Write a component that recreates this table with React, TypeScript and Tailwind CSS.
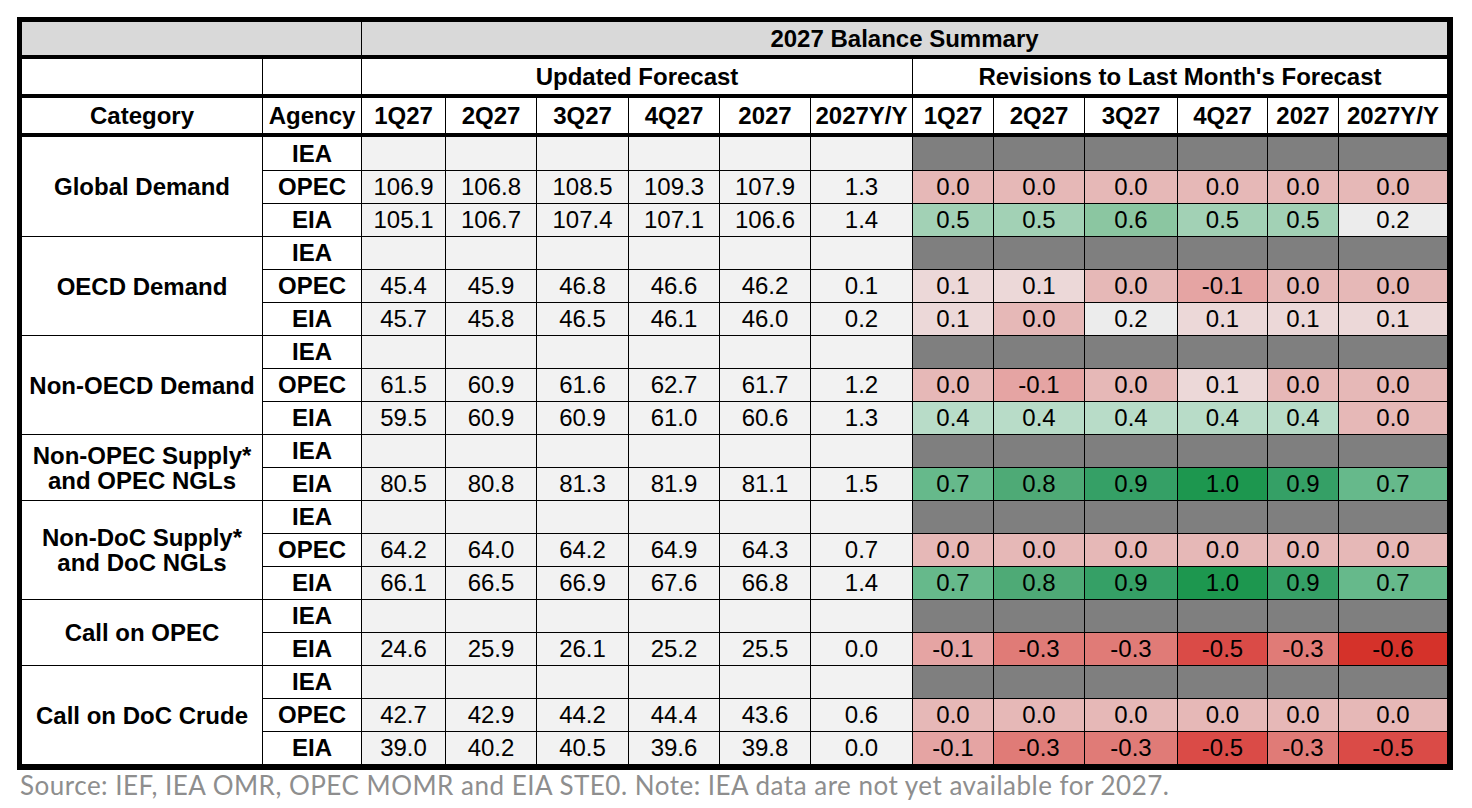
import React from "react";

type Rev = { v: string; c: string } | null;

const GRAY = "bg-[#7f7f7f]";
const PINK = "bg-[#e6b8b7]";
const P1 = "bg-[#ecd8d8]";
const M1 = "bg-[#e5a4a3]";
const M3 = "bg-[#e07b77]";
const M5 = "bg-[#da4b47]";
const M6 = "bg-[#d5322a]";
const NEU = "bg-[#ececec]";
const G4 = "bg-[#b8dcc8]";
const G5 = "bg-[#a2d1b5]";
const G6 = "bg-[#8bc6a1]";
const G7 = "bg-[#66b98b]";
const G8 = "bg-[#4eaa76]";
const G9 = "bg-[#35a066]";
const G10 = "bg-[#1d974f]";

const r = (v: string, c: string) => ({ v, c });

type Row = { agency: string; data: string[] | null; rev: Rev[] | null };
type Group = { label: React.ReactNode; rows: Row[] };

const zeros = (): Rev[] => Array.from({ length: 6 }, () => r("0.0", PINK));

const groups: Group[] = [
  {
    label: "Global Demand",
    rows: [
      { agency: "IEA", data: null, rev: null },
      { agency: "OPEC", data: ["106.9", "106.8", "108.5", "109.3", "107.9", "1.3"], rev: zeros() },
      {
        agency: "EIA",
        data: ["105.1", "106.7", "107.4", "107.1", "106.6", "1.4"],
        rev: [r("0.5", G5), r("0.5", G5), r("0.6", G6), r("0.5", G5), r("0.5", G5), r("0.2", NEU)],
      },
    ],
  },
  {
    label: "OECD Demand",
    rows: [
      { agency: "IEA", data: null, rev: null },
      {
        agency: "OPEC",
        data: ["45.4", "45.9", "46.8", "46.6", "46.2", "0.1"],
        rev: [r("0.1", P1), r("0.1", P1), r("0.0", PINK), r("-0.1", M1), r("0.0", PINK), r("0.0", PINK)],
      },
      {
        agency: "EIA",
        data: ["45.7", "45.8", "46.5", "46.1", "46.0", "0.2"],
        rev: [r("0.1", P1), r("0.0", PINK), r("0.2", NEU), r("0.1", P1), r("0.1", P1), r("0.1", P1)],
      },
    ],
  },
  {
    label: "Non-OECD Demand",
    rows: [
      { agency: "IEA", data: null, rev: null },
      {
        agency: "OPEC",
        data: ["61.5", "60.9", "61.6", "62.7", "61.7", "1.2"],
        rev: [r("0.0", PINK), r("-0.1", M1), r("0.0", PINK), r("0.1", P1), r("0.0", PINK), r("0.0", PINK)],
      },
      {
        agency: "EIA",
        data: ["59.5", "60.9", "60.9", "61.0", "60.6", "1.3"],
        rev: [r("0.4", G4), r("0.4", G4), r("0.4", G4), r("0.4", G4), r("0.4", G4), r("0.0", PINK)],
      },
    ],
  },
  {
    label: (
      <>
        Non-OPEC Supply*
        <br />
        and OPEC NGLs
      </>
    ),
    rows: [
      { agency: "IEA", data: null, rev: null },
      {
        agency: "EIA",
        data: ["80.5", "80.8", "81.3", "81.9", "81.1", "1.5"],
        rev: [r("0.7", G7), r("0.8", G8), r("0.9", G9), r("1.0", G10), r("0.9", G9), r("0.7", G7)],
      },
    ],
  },
  {
    label: (
      <>
        Non-DoC Supply*
        <br />
        and DoC NGLs
      </>
    ),
    rows: [
      { agency: "IEA", data: null, rev: null },
      { agency: "OPEC", data: ["64.2", "64.0", "64.2", "64.9", "64.3", "0.7"], rev: zeros() },
      {
        agency: "EIA",
        data: ["66.1", "66.5", "66.9", "67.6", "66.8", "1.4"],
        rev: [r("0.7", G7), r("0.8", G8), r("0.9", G9), r("1.0", G10), r("0.9", G9), r("0.7", G7)],
      },
    ],
  },
  {
    label: "Call on OPEC",
    rows: [
      { agency: "IEA", data: null, rev: null },
      {
        agency: "EIA",
        data: ["24.6", "25.9", "26.1", "25.2", "25.5", "0.0"],
        rev: [r("-0.1", M1), r("-0.3", M3), r("-0.3", M3), r("-0.5", M5), r("-0.3", M3), r("-0.6", M6)],
      },
    ],
  },
  {
    label: "Call on DoC Crude",
    rows: [
      { agency: "IEA", data: null, rev: null },
      { agency: "OPEC", data: ["42.7", "42.9", "44.2", "44.4", "43.6", "0.6"], rev: zeros() },
      {
        agency: "EIA",
        data: ["39.0", "40.2", "40.5", "39.6", "39.8", "0.0"],
        rev: [r("-0.1", M1), r("-0.3", M3), r("-0.3", M3), r("-0.5", M5), r("-0.3", M3), r("-0.5", M5)],
      },
    ],
  },
];

const DW = ["w-[84px]", "w-[91px]", "w-[92px]", "w-[91px]", "w-[91px]", "w-[102px]"];
const RW = ["w-[81px]", "w-[91px]", "w-[93px]", "w-[90px]", "w-[71px]", "w-[109px]"];
const HEADS = ["1Q27", "2Q27", "3Q27", "4Q27", "2027", "2027Y/Y"];

const cell = "flex items-center justify-center border-l border-black shrink-0";

export default function App() {
  let first = true;
  return (
    <div className="w-[1472px] h-[808px] bg-white pl-[17px] pt-[17px] text-black">
      <div
        className="w-[1436px] border-[5px] border-r-[6px] border-b-[6px] border-black text-[24px]"
        style={{ fontFamily: '"Liberation Sans", Arial, sans-serif' }}
      >
        {/* header row 1 */}
        <div className="flex h-[37px] border-b-4 border-black bg-[#d9d9d9] font-bold">
          <div className="w-[339px] shrink-0" />
          <div className="flex flex-1 items-center justify-center border-l border-black">2027 Balance Summary</div>
        </div>
        {/* header row 2 */}
        <div className="flex h-[39px] border-b-4 border-black font-bold">
          <div className="w-[240px] shrink-0" />
          <div className={`${cell} w-[99px]`} />
          <div className={`${cell} w-[551px]`}>Updated Forecast</div>
          <div className={`${cell} flex-1`}>Revisions to Last Month's Forecast</div>
        </div>
        {/* header row 3 */}
        <div className="flex h-[39px] border-b-4 border-black font-bold">
          <div className="flex w-[240px] shrink-0 items-center justify-center">Category</div>
          <div className={`${cell} w-[99px]`}>Agency</div>
          {HEADS.map((h, i) => (
            <div key={"d" + i} className={`${cell} ${DW[i]}`}>
              {h}
            </div>
          ))}
          {HEADS.map((h, i) => (
            <div key={"r" + i} className={`${cell} ${RW[i]}`}>
              {h}
            </div>
          ))}
        </div>
        {/* body */}
        {groups.map((g, gi) => (
          <div key={gi} className="flex">
            <div
              className={`flex w-[240px] shrink-0 items-center justify-center text-center font-bold leading-[25px] ${
                gi > 0 ? "border-t border-black" : ""
              }`}
            >
              <div>{g.label}</div>
            </div>
            <div className="flex flex-col">
              {g.rows.map((row, ri) => {
                const top = first ? "" : "border-t border-black";
                first = false;
                return (
                  <div key={ri} className={`flex h-[33px] ${top}`}>
                    <div className={`${cell} w-[99px] font-bold`}>{row.agency}</div>
                    {DW.map((w, i) => (
                      <div key={"d" + i} className={`${cell} ${w} bg-[#f2f2f2]`}>
                        {row.data ? row.data[i] : ""}
                      </div>
                    ))}
                    {RW.map((w, i) => {
                      const rv = row.rev ? row.rev[i] : null;
                      return (
                        <div key={"r" + i} className={`${cell} ${w} ${rv ? rv.c : GRAY}`}>
                          {rv ? rv.v : ""}
                        </div>
                      );
                    })}
                  </div>
                );
              })}
            </div>
          </div>
        ))}
      </div>
      <div
        className="ml-[3px] mt-[1px] text-[26px] leading-[29px] tracking-[0.5px] text-[#8e8e8e]"
        style={{ fontFamily: 'Lato, "Noto Sans", sans-serif' }}
      >
        Source: IEF, IEA OMR, OPEC MOMR and EIA STE0. Note: IEA data are not yet available for 2027.
      </div>
    </div>
  );
}
